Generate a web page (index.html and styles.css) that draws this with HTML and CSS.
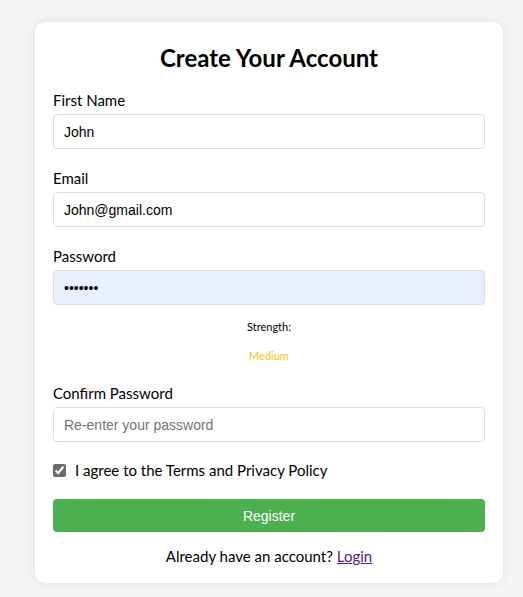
FILE: index.html
```html
<!DOCTYPE html>
<html lang="en">
<head>
<meta charset="utf-8">
<title>Create Your Account</title>
<link rel="stylesheet" href="styles.css">
</head>
<body>
<div class="card">
  <h2 class="title">Create Your Account</h2>
  <form class="form">
    <div class="group">
      <label class="label" for="fn">First Name</label>
      <input class="input" id="fn" type="text" value="John">
    </div>
    <div class="group">
      <label class="label" for="em">Email</label>
      <input class="input" id="em" type="email" value="John@gmail.com">
    </div>
    <div class="group">
      <label class="label" for="pw">Password</label>
      <input class="input autofill" id="pw" type="password" value="1234567">
    </div>
    <div class="strength">
      <p class="strength-label">Strength:</p>
      <p class="strength-value">Medium</p>
    </div>
    <div class="group">
      <label class="label" for="cpw">Confirm Password</label>
      <input class="input" id="cpw" type="password" placeholder="Re-enter your password">
    </div>
    <label class="agree">
      <input class="check" type="checkbox" checked>
      <span>I agree to the Terms and Privacy Policy</span>
    </label>
    <button class="btn" type="button">Register</button>
    <p class="login">Already have an account? <a class="login-link" href="#">Login</a></p>
  </form>
</div>
</body>
</html>
```
FILE: styles.css
```css
html, body {
  margin: 0;
  padding: 0;
  background: #f4f4f4;
}
body {
  font-family: Lato, "Noto Sans", sans-serif;
  color: #000;
  padding: 22px 20px 14px 35px;
}
.card {
  width: 432px;
  background: #fff;
  border-radius: 10px;
  padding: 18px 18px 18px 18px;
  box-shadow: 0 0 10px rgba(0,0,0,0.08);
}
.title {
  margin: 3px 0 16px;
  font-size: 24px;
  font-weight: 700;
  text-align: center;
  line-height: 30px;
}
.form {
  display: flex;
  flex-direction: column;
}
.group {
  display: flex;
  flex-direction: column;
  margin-bottom: 18px;
}
.label {
  font-size: 15px;
  line-height: 22px;
  margin-bottom: 3px;
}
.input {
  box-sizing: border-box;
  height: 35px;
  width: 100%;
  padding: 8px 10px;
  border: 1px solid #ddd;
  border-radius: 4px;
  font-family: "Liberation Sans", Arial, sans-serif;
  font-size: 14px;
  color: #000;
  background: #fff;
  outline: none;
}
.input::placeholder {
  color: #757575;
}
.autofill {
  background: #e8f0fe;
}
.strength {
  text-align: center;
  margin: -4px 0 19px;
}
.strength-label {
  font-size: 11px;
  margin: 0 0 14px;
  line-height: 15px;
}
.strength-value {
  font-size: 11px;
  margin: 0;
  line-height: 15px;
  color: #ffc107;
}
.agree {
  display: flex;
  align-items: center;
  gap: 9px;
  font-size: 15px;
  margin: 1px 0 20px;
}
.check {
  margin: 0;
  width: 13px;
  height: 13px;
  accent-color: #6b6b6b;
}
.btn {
  height: 33px;
  width: 100%;
  border: none;
  border-radius: 4px;
  background: #4caf50;
  color: #fff;
  font-family: "Liberation Sans", Arial, sans-serif;
  font-size: 14px;
}
.login {
  text-align: center;
  font-size: 15px;
  margin: 15px 0 0;
}
.login-link {
  color: #551a8b;
}
```
